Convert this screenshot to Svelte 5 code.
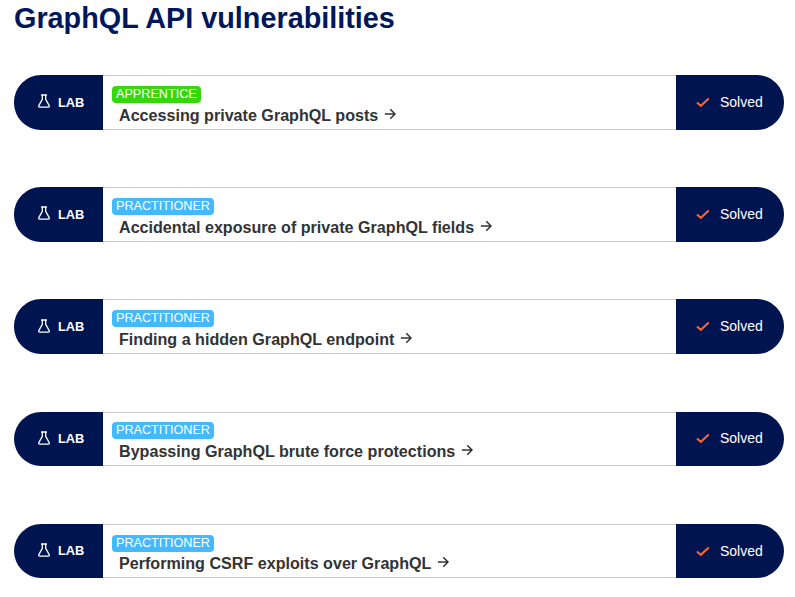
<script>
  const labs = [
    { level: 'APPRENTICE', title: 'Accessing private GraphQL posts' },
    { level: 'PRACTITIONER', title: 'Accidental exposure of private GraphQL fields' },
    { level: 'PRACTITIONER', title: 'Finding a hidden GraphQL endpoint' },
    { level: 'PRACTITIONER', title: 'Bypassing GraphQL brute force protections' },
    { level: 'PRACTITIONER', title: 'Performing CSRF exploits over GraphQL' },
  ];
</script>

<main class="page">
  <h1>GraphQL API vulnerabilities</h1>
  <div class="labs">
    {#each labs as lab}
      <div class="lab">
        <div class="lab-tag">
          <svg class="flask" viewBox="0 0 14 14" width="14" height="14" aria-hidden="true">
            <path d="M4.5 1h5M5.3 1v4.4L1.8 11.6c-.5.8 0 1.6.9 1.6h8.6c.9 0 1.4-.8.9-1.6L8.7 5.4V1" fill="none" stroke="#fff" stroke-width="1.3" stroke-linejoin="round" stroke-linecap="round" />
          </svg>
          <span>LAB</span>
        </div>
        <div class="lab-body">
          <span class="level" class:apprentice={lab.level === 'APPRENTICE'}>{lab.level}</span>
          <a class="title" href="#top">
            {lab.title}
            <svg class="arrow" viewBox="0 0 12 12" width="12" height="12" aria-hidden="true">
              <path d="M.8 6h10M6.3 1.2 11 6l-4.7 4.8" fill="none" stroke="#333" stroke-width="1.5" />
            </svg>
          </a>
        </div>
        <div class="lab-status">
          <svg class="check" viewBox="0 0 14 12" width="14" height="12" aria-hidden="true">
            <path d="M1 6.5 4.8 9.8 12.8 2.5" fill="none" stroke="#ff6633" stroke-width="2" />
          </svg>
          <span>Solved</span>
        </div>
      </div>
    {/each}
  </div>
</main>

<style>
  :global(body) {
    background: #fff;
    font-family: "Liberation Sans", Arial, sans-serif;
  }

  .page {
    padding: 1px 11px 0 14px;
  }

  h1 {
    margin: 0;
    padding-bottom: 38.95px;
    font-size: 28.8px;
    line-height: 35px;
    font-weight: 700;
    color: #00175c;
  }

  .labs {
    display: flex;
    flex-direction: column;
    gap: 57.6px;
  }

  .lab {
    display: flex;
    align-items: stretch;
    height: 54.6px;
  }

  .lab-tag,
  .lab-status {
    display: flex;
    align-items: center;
    background: #00144f;
    color: #fff;
    font-size: 14px;
  }

  .lab-tag {
    flex: 0 0 89px;
    box-sizing: border-box;
    padding-left: 23px;
    gap: 7px;
    border-radius: 27px 0 0 27px;
    font-weight: 700;
    font-size: 12.8px;
  }

  .flask {
    margin-top: -2px;
  }

  .lab-body {
    flex: 1;
    box-sizing: border-box;
    padding: 9.85px 0 0 9px;
    border-top: 1px solid #ccc;
    border-bottom: 1px solid #ccc;
  }

  .level {
    display: block;
    width: fit-content;
    padding: 0 4px;
    border-radius: 4px;
    background: #43baff;
    color: #fff;
    font-size: 12.64px;
    line-height: 17px;
  }

  .level.apprentice {
    background: #37d80b;
  }

  .title {
    display: block;
    margin: 1.8px 0 0 7px;
    color: #333;
    font-size: 16.13px;
    line-height: 20px;
    font-weight: 700;
    text-decoration: none;
  }

  .arrow {
    margin-left: 1px;
    position: relative;
    top: -1px;
  }

  .lab-status {
    flex: 0 0 108px;
    box-sizing: border-box;
    padding: 0 0 0.8px 20px;
    gap: 10px;
    border-radius: 0 27px 27px 0;
  }
</style>
